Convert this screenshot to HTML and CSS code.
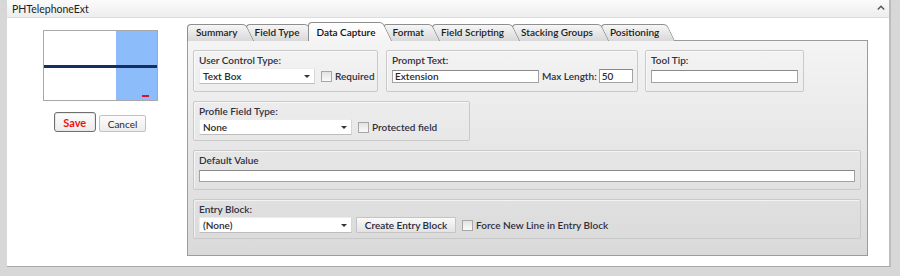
FILE: index.html
```html
<!DOCTYPE html>
<html>
<head>
  <title>PHTelephoneExt</title>
  <link rel="stylesheet" href="styles.css">
</head>
<body>
  <div class="window">
    <div class="titlebar">
      <span class="title">PHTelephoneExt</span>
      <svg class="collapse" width="8" height="5" viewBox="0 0 8 5">
        <path d="M0.8 4.4 L4 1.2 L7.2 4.4" fill="none" stroke="#555" stroke-width="1.4"/>
      </svg>
    </div>

    <div class="content">
      <div class="side">
        <div class="preview">
          <div class="preview-white"></div>
          <div class="preview-blue"><span class="preview-mark"></span></div>
          <div class="preview-line"></div>
        </div>
        <div class="actions">
          <button class="btn btn-save">Save</button>
          <button class="btn">Cancel</button>
        </div>
      </div>

      <div class="editor">
        <div class="tabs">
          <div class="tab" style="z-index: 7">Summary</div>
          <div class="tab" style="z-index: 6">Field Type</div>
          <div class="tab active">Data Capture</div>
          <div class="tab" style="z-index: 4">Format</div>
          <div class="tab" style="z-index: 3">Field Scripting</div>
          <div class="tab" style="z-index: 2">Stacking Groups</div>
          <div class="tab" style="z-index: 1">Positioning</div>
        </div>

        <div class="panel">
          <div class="row">
            <div class="group g-control">
              <div class="group-label">User Control Type:</div>
              <div class="group-row">
                <div class="combo combo-control"><span class="combo-text">Text Box</span><span class="combo-arrow"></span></div>
                <span class="check"></span><span class="check-label">Required</span>
              </div>
            </div>
            <div class="group g-prompt">
              <div class="group-label">Prompt Text:</div>
              <div class="group-row">
                <input class="field field-prompt" value="Extension">
                <span class="inline-label">Max Length:</span>
                <input class="field field-max" value="50">
              </div>
            </div>
            <div class="group g-tip">
              <div class="group-label">Tool Tip:</div>
              <div class="group-row">
                <input class="field field-tip" value="">
              </div>
            </div>
          </div>

          <div class="row">
            <div class="group g-profile">
              <div class="group-label">Profile Field Type:</div>
              <div class="group-row">
                <div class="combo combo-wide"><span class="combo-text">None</span><span class="combo-arrow"></span></div>
                <span class="check check-gap"></span><span class="check-label">Protected field</span>
              </div>
            </div>
          </div>

          <div class="row">
            <div class="group g-full">
              <div class="group-label">Default Value</div>
              <div class="group-row">
                <input class="field field-full" value="">
              </div>
            </div>
          </div>

          <div class="row">
            <div class="group g-full">
              <div class="group-label">Entry Block:</div>
              <div class="group-row">
                <div class="combo combo-wide"><span class="combo-text">(None)</span><span class="combo-arrow"></span></div>
                <button class="btn-entry">Create Entry Block</button>
                <span class="check check-gap"></span><span class="check-label">Force New Line in Entry Block</span>
              </div>
            </div>
          </div>
        </div>
      </div>
    </div>
  </div>
</body>
</html>
```

FILE: styles.css
```css
body {
  margin: 0;
  background-color: #d7d7d7;
  font-family: "Lato", "Liberation Sans", sans-serif;
  font-size: 10px;
  color: #2b2b38;
}

.window {
  margin-left: 7px;
  width: 882px;
  height: 266px;
  background-color: #fff;
  border-right: 2px solid #bcbcbc;
  border-bottom: 1px solid #a9a9a9;
  box-sizing: content-box;
}

.titlebar {
  height: 17px;
  border-bottom: 1px solid #dcdcdc;
  background: linear-gradient(#fbfbfb, #ededed);
  display: flex;
  align-items: center;
  justify-content: space-between;
  padding: 0 4px 0 5px;
}

.title {
  font-size: 10.5px;
  color: #1e1e1e;
}

.collapse {
  margin-bottom: 2px;
}

.content {
  display: flex;
}

/* left column: preview + save/cancel */
.side {
  width: 174px;
  padding-left: 6px;
  display: flex;
  flex-direction: column;
  align-items: center;
}

.preview {
  position: relative;
  margin-top: 12px;
  width: 113px;
  height: 69px;
  border: 1px solid #a8a8a8;
  display: flex;
}

.preview-white {
  flex: 1;
  background-color: #fff;
}

.preview-blue {
  position: relative;
  width: 41px;
  background-color: #8cbcf9;
}

.preview-mark {
  position: absolute;
  left: 26px;
  top: 64px;
  width: 7px;
  height: 2px;
  background-color: #e0102a;
}

.preview-line {
  position: absolute;
  left: 0;
  right: 0;
  top: 34px;
  height: 3px;
  background-color: #15305c;
}

.actions {
  display: flex;
  align-items: flex-end;
  gap: 3px;
  margin-top: 11px;
}

.btn {
  font-family: inherit;
  font-size: 10px;
  height: 17px;
  padding: 0 8px;
  border: 1px solid #c2c2c2;
  border-radius: 2px;
  background: linear-gradient(#fdfdfd, #ececec);
  color: #2a2a2a;
}

.btn-save {
  height: 20px;
  width: 42px;
  padding: 0;
  border: 1px solid #6e6e6e;
  border-radius: 3px;
  box-shadow: inset 0 0 0 1px #e8e8e8;
  color: #ee1111;
  font-weight: bold;
  font-size: 11px;
}

/* tabs + panel */
.editor {
  padding-top: 4px;
  width: 681px;
}

.tabs {
  display: flex;
  align-items: flex-end;
  height: 19px;
  margin-bottom: -1px;
  position: relative;
  z-index: 2;
}

.tab {
  position: relative;
  height: 17px;
  line-height: 17px;
  padding: 0 8px 0 9px;
  font-weight: 600;
  color: #1c1c1c;
}

.tab::before {
  content: "";
  position: absolute;
  left: 0;
  top: 0;
  bottom: 0;
  right: 6px;
  background: linear-gradient(#f6f6f6, #d8d8d8);
  border-left: 1px solid #8e8e8e;
  border-top: 1px solid #8e8e8e;
  border-top-left-radius: 4px;
  z-index: -1;
}

.tab::after {
  content: "";
  position: absolute;
  right: 0;
  top: 0;
  bottom: 0;
  width: 16px;
  background: linear-gradient(#f6f6f6, #d8d8d8);
  border-top: 1px solid #8e8e8e;
  border-right: 1px solid #8e8e8e;
  border-top-right-radius: 4px;
  transform: skewX(26deg);
  transform-origin: top left;
  z-index: -1;
}

.tab.active {
  height: 19px;
  line-height: 20px;
  z-index: 10;
  color: #111;
}

.tab.active::before,
.tab.active::after {
  background: linear-gradient(#ffffff, #f4f4f4);
}

.panel {
  height: 216px;
  box-sizing: border-box;
  border: 1px solid #9c9c9c;
  background: linear-gradient(#f4f4f4, #d9d9d9);
  padding: 9px 6px 0 5px;
  display: flex;
  flex-direction: column;
  gap: 9px;
}

.row {
  display: flex;
  gap: 8px;
}

.group {
  height: 40px;
  box-sizing: border-box;
  border: 1px solid #c9c9c9;
  border-radius: 2px;
  box-shadow: inset 1px 1px 0 rgba(255, 255, 255, 0.6);
  padding: 3px 5px 0 5px;
  flex-shrink: 0;
}

.row:first-child .group {
  height: 42px;
}

.g-control { width: 185px; }
.g-prompt { width: 252px; }
.g-tip { width: 159px; margin-left: -1px; }
.g-profile { width: 277px; }
.g-full { flex: 1; }

.group-label {
  font-weight: 600;
  line-height: 13px;
  color: #30303e;
}

.group-row {
  display: flex;
  align-items: center;
  height: 16px;
  margin-top: 1px;
  white-space: nowrap;
}

.group-row > * {
  flex-shrink: 0;
}

.combo {
  display: flex;
  height: 16px;
  box-sizing: border-box;
  background-color: #fff;
  border: 1px solid #ececec;
  border-bottom-color: #bdbdbd;
  border-right-color: #d6d6d6;
}

.combo-control { width: 116px; }
.combo-wide { width: 153px; }

.combo-text {
  flex: 1;
  padding-left: 3px;
  line-height: 14px;
  font-weight: 600;
  color: #2a2a2a;
}

.combo-arrow {
  width: 12px;
  position: relative;
}

.combo-arrow::after {
  content: "";
  position: absolute;
  left: 2px;
  top: 6px;
  border-left: 3px solid transparent;
  border-right: 3px solid transparent;
  border-top: 3px solid #333;
}

.check {
  width: 9px;
  height: 9px;
  border: 1px solid #a6a6a6;
  background: linear-gradient(#e2e2e2, #fafafa);
  margin-left: 6px;
  margin-right: 3px;
}

.check-gap {
  margin-left: 6px;
}

.check-label,
.inline-label {
  font-weight: 600;
  color: #2f2f3c;
}

.inline-label {
  margin: 0 2px 0 3px;
}

.field {
  height: 13px;
  box-sizing: border-box;
  border: 1px solid #a2a2a2;
  border-top-color: #8a8a8a;
  background-color: #fff;
  padding: 0 2px;
  font-family: inherit;
  font-size: 10px;
  font-weight: 600;
  color: #2a2a2a;
  outline: none;
}

.field-prompt { width: 147px; }
.field-max { width: 34px; height: 14px; }
.field-tip { width: 147px; }
.field-full { flex: 1; flex-shrink: 1; min-width: 0; height: 12px; }

.btn-entry {
  font-family: inherit;
  font-size: 10px;
  font-weight: 600;
  height: 16px;
  width: 100px;
  margin-left: 4px;
  padding: 0;
  border: 1px solid #c4c4c4;
  border-radius: 1px;
  background: linear-gradient(#fafafa, #e2e2e2);
  color: #2a2a38;
}
```
